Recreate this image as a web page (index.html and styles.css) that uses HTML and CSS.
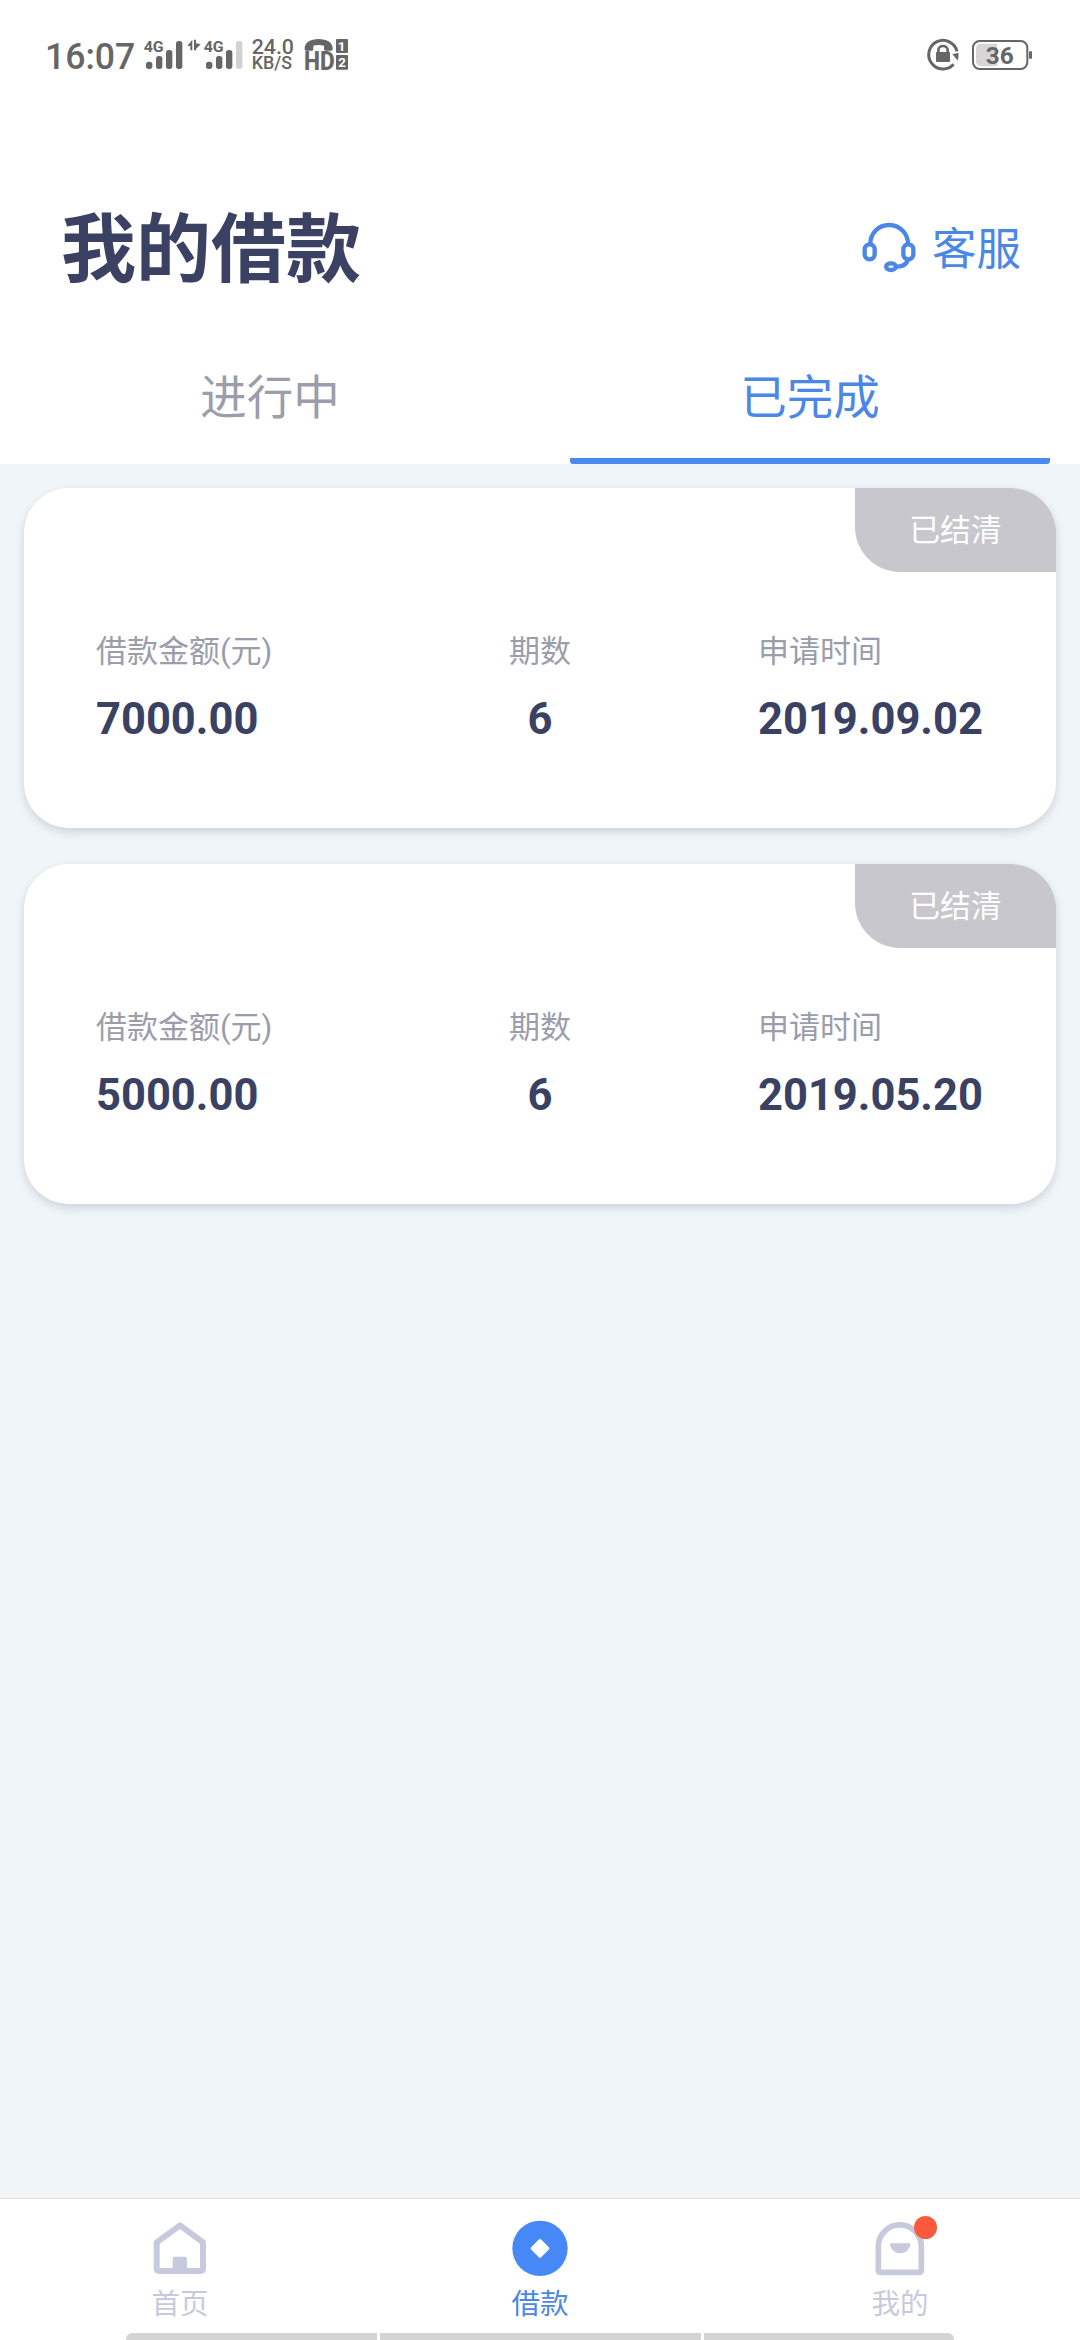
FILE: index.html
```html
<!DOCTYPE html>
<html lang="zh-CN">
<head>
<meta charset="utf-8">
<title>我的借款</title>
<link rel="stylesheet" href="styles.css">
</head>
<body>
<div class="app">
  <div class="status">
    <svg class="status-left" viewBox="0 0 1020 180" fill="#666">
      <text x="45" y="132" font-size="108" font-weight="500" textLength="271" lengthAdjust="spacingAndGlyphs">16:07</text>
      <text x="341" y="80" font-size="45" font-weight="700" textLength="60" lengthAdjust="spacingAndGlyphs">4G</text>
      <rect x="348" y="110" width="19" height="22" rx="8"/>
      <rect x="378" y="93" width="19" height="39" rx="8"/>
      <rect x="408" y="75" width="19" height="57" rx="8"/>
      <rect x="438" y="48" width="19" height="84" rx="8"/>
      <path d="M487 44v32h-6V63h-9zM492 44h6v11l14 3-14 14v4h-6z"/>
      <text x="521" y="80" font-size="45" font-weight="700" textLength="60" lengthAdjust="spacingAndGlyphs">4G</text>
      <rect x="528" y="110" width="19" height="22" rx="8"/>
      <rect x="558" y="93" width="19" height="39" rx="8"/>
      <rect x="588" y="75" width="19" height="57" rx="8"/>
      <rect x="618" y="48" width="19" height="84" rx="8" fill="#d2d2d2"/>
      <text x="665" y="86" font-size="59" font-weight="500" textLength="127" lengthAdjust="spacingAndGlyphs">24.0</text>
      <text x="665" y="132" font-size="54" font-weight="500" textLength="121" lengthAdjust="spacingAndGlyphs">KB/S</text>
      <path d="M824 74C822 52 842 42 866 42s44 10 42 32l-3 3h-20l-3-3V62q-16-4-32 0v12l-3 3h-20z"/>
      <text x="822" y="134" font-size="76" font-weight="800" textLength="92" lengthAdjust="spacingAndGlyphs">HD</text>
      <rect x="918" y="42" width="36" height="42" rx="3"/>
      <rect x="918" y="90" width="36" height="44" rx="3"/>
      <text x="935" y="77" font-size="40" font-weight="700" fill="#fff" text-anchor="middle">1</text>
      <text x="936" y="126" font-size="40" font-weight="700" fill="#fff" text-anchor="middle">2</text>
    </svg>
    <svg class="status-right" viewBox="0 0 540 180" fill="#666">
      <path d="M171 79A43 43 0 1 0 161 118" fill="none" stroke="#666" stroke-width="9"/>
      <path d="M157 88l19-5-2 24z"/>
      <rect x="108" y="81" width="42" height="30" rx="3"/>
      <path d="M115 82v-7a14 12 0 0 1 28 0v7" fill="none" stroke="#666" stroke-width="8"/>
      <path d="M244 56h48v68h-48q-16 0-16-16V72q0-16 16-16z" fill="#d6d6d6"/>
      <rect x="219" y="48" width="163" height="84" rx="20" fill="none" stroke="#666" stroke-width="6"/>
      <rect x="387" y="79" width="9" height="22" rx="2"/>
      <text x="257" y="116" font-size="71" font-weight="700" textLength="84" lengthAdjust="spacingAndGlyphs">36</text>
    </svg>
  </div>

  <header class="header">
    <h1 class="title">我的借款</h1>
    <a class="service">
      <svg class="service-icon" viewBox="60 60 174 165" fill="none" stroke="#4b87e6" stroke-width="13">
        <path d="M91 132c0-32 24-57 56-57s57 25 57 57"/>
        <rect x="74" y="133" width="30" height="45" rx="15"/>
        <rect x="190" y="133" width="30" height="45" rx="15"/>
        <path d="M204 179c-4 14-16 21-33 21"/>
        <ellipse cx="153" cy="200" rx="14.500" ry="10"/>
      </svg>
      <span class="service-text">客服</span>
    </a>
  </header>

  <nav class="tabs">
    <div class="tab">进行中</div>
    <div class="tab tab-active">已完成</div>
  </nav>

  <main class="list">
    <section class="card">
      <div class="badge">已结清</div>
      <div class="fields">
        <div class="field"><span class="label">借款金额(元)</span><span class="value">7000.00</span></div>
        <div class="field field-mid"><span class="label">期数</span><span class="value">6</span></div>
        <div class="field field-date"><span class="label">申请时间</span><span class="value">2019.09.02</span></div>
      </div>
    </section>
    <section class="card">
      <div class="badge">已结清</div>
      <div class="fields">
        <div class="field"><span class="label">借款金额(元)</span><span class="value">5000.00</span></div>
        <div class="field field-mid"><span class="label">期数</span><span class="value">6</span></div>
        <div class="field field-date"><span class="label">申请时间</span><span class="value">2019.05.20</span></div>
      </div>
    </section>
  </main>

  <footer class="bottom">
    <div class="nav">
      <div class="nav-item">
        <svg class="nav-icon" viewBox="150 108 180 192">
          <path d="M240 136L309 187V265q0 8-8 8H178q-8 0-8-8V187z" fill="none" stroke="#c7c9dc" stroke-width="18" stroke-linejoin="round"/>
          <path d="M218 273V236q0-6 6-6h31q6 0 6 6v37z" fill="#c7c9dc"/>
        </svg>
        <span>首页</span>
      </div>
      <div class="nav-item nav-active">
        <svg class="nav-icon" viewBox="150 108 180 192">
          <circle cx="240" cy="205" r="83" fill="#4689f6"/>
          <path d="M240 182l23 23-23 23-23-23z" fill="#fff" stroke="#fff" stroke-width="10" stroke-linejoin="round"/>
        </svg>
        <span>借款</span>
      </div>
      <div class="nav-item">
        <svg class="nav-icon" viewBox="150 108 180 192">
          <path d="M175 271V199a64.500 64.500 0 0 1 129 0V271q0 6-6 6H181q-6 0-6-6z" fill="none" stroke="#c7c9dc" stroke-width="17"/>
          <path d="M213 190h55q4 0 3 5a31 30 0 0 1-61 0q-1-5 3-5z" fill="#c7c9dc"/>
          <circle cx="316.500" cy="142.500" r="34.500" fill="#fc5a3c"/>
        </svg>
        <span>我的</span>
      </div>
    </div>
    <div class="gesture"><i></i><i></i><i></i></div>
  </footer>
</div>
</body>
</html>
```

FILE: styles.css
```css
* { box-sizing: border-box; }

body {
  margin: 0;
  font-family: Roboto, "Noto Sans CJK SC", sans-serif;
  background: #f0f5f9;
}

.app {
  display: flex;
  flex-direction: column;
  width: 1080px;
  height: 2340px;
  overflow: hidden;
}

.status {
  display: flex;
  justify-content: space-between;
  height: 190px;
  padding: 25px 0 0 30px;
  background: #fff;
}
.status-left { width: 340px; height: 60px; }
.status-right { width: 180px; height: 60px; }

.header {
  display: flex;
  align-items: center;
  justify-content: space-between;
  height: 140px;
  padding: 0 59px 26px 61px;
  background: #fff;
}
.title {
  margin: 0;
  padding-top: 6px;
  font-size: 75px;
  font-weight: 700;
  line-height: 110px;
  color: #3a4162;
}
.service {
  display: flex;
  align-items: center;
  gap: 14px;
  font-size: 44.5px;
  line-height: 60px;
  color: #4b87e6;
}
.service-icon { width: 58px; height: 55px; }
.service-text { padding-top: 5px; }

.tabs {
  display: flex;
  height: 134px;
  padding: 0 30px;
  gap: 60px;
  background: #fff;
}
.tab {
  flex: 1;
  padding-top: 33px;
  font-size: 46.5px;
  line-height: 70px;
  text-align: center;
  color: #9b9dab;
}
.tab-active {
  color: #4b87e6;
  background: linear-gradient(#4a8af0, #4a8af0) bottom / 100% 6px no-repeat;
  border-radius: 0 0 3px 3px;
}

.list {
  flex: 1;
  display: flex;
  flex-direction: column;
  gap: 36px;
  padding: 24px;
}
.card {
  height: 340px;
  border-radius: 45px;
  background: #fff;
  box-shadow: 0 4px 8px rgba(60, 70, 95, 0.19);
}
.badge {
  width: 201px;
  height: 84px;
  margin-left: auto;
  border-radius: 0 45px 0 45px;
  background: #c8c7cd;
  color: #fff;
  font-size: 30.8px;
  line-height: 86px;
  text-align: center;
}
.fields {
  display: grid;
  grid-template-columns: 1fr 120px 1fr;
  padding: 58px 72px 0;
}
.field {
  display: flex;
  flex-direction: column;
}
.field-mid { align-items: center; }
.field-date { padding-left: 158px; }
.label {
  font-size: 31px;
  line-height: 44px;
  color: #9b9dab;
  white-space: nowrap;
}
.value {
  margin-top: 16px;
  font-size: 43.5px;
  font-weight: 700;
  line-height: 60px;
  color: #3a4162;
}

.bottom {
  height: 146px;
  border-top: 4px solid #f5f5f5;
  background: #fff;
}
.nav {
  display: grid;
  grid-template-columns: repeat(3, 1fr);
  height: 135px;
  border-top: 1px solid #dcdcde;
}
.nav-item {
  display: flex;
  flex-direction: column;
  align-items: center;
  padding-top: 17px;
  font-size: 28.5px;
  line-height: 40px;
  color: #c7c9dc;
}
.nav-item span { margin-top: 5px; }
.nav-active { color: #4b87e6; }
.nav-icon { width: 60px; height: 64px; overflow: visible; }

.gesture {
  display: grid;
  grid-template-columns: 251px 321px 250px;
  justify-content: center;
  gap: 3px;
  height: 7px;
}
.gesture i { background: #d4d4d4; }
.gesture i:first-child { border-top-left-radius: 6px; }
.gesture i:last-child { border-top-right-radius: 6px; }
```
